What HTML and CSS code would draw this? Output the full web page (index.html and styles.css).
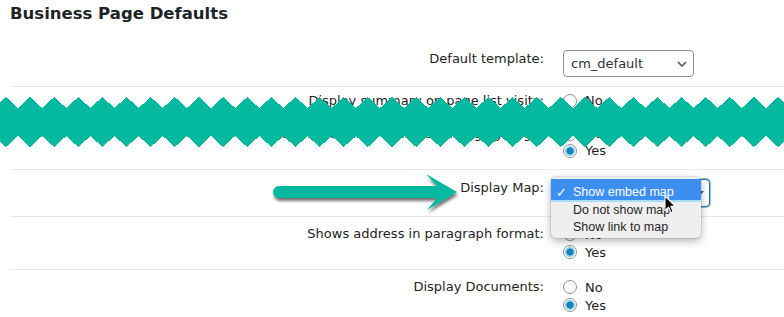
FILE: index.html
```html
<!DOCTYPE html>
<html lang="en">
<head>
    <meta charset="UTF-8">
    <meta name="viewport" content="width=device-width, initial-scale=1.0">
    <title>Business Page Defaults</title>
    <link rel="stylesheet" href="styles.css">
</head>
<body>
    <div class="page">
        <h2 class="title">Business Page Defaults</h2>

        <div class="rows">
            <div class="row">
                <label class="row-label">Default template:</label>
                <div class="field">
                    <div class="select-wrap">
                        <select class="select"><option>cm_default</option></select>
                        <svg class="chevron" width="10" height="6" viewBox="0 0 10 6"><path d="M1 1 L5 5 L9 1" fill="none" stroke="#50575e" stroke-width="1.6"/></svg>
                    </div>
                </div>
            </div>

            <div class="row compact first-half">
                <label class="row-label">Display summary on page list visits:</label>
                <div class="field">
                    <label class="option"><input type="radio" name="summary"> No</label>
                    <label class="option"><input type="radio" name="summary" checked> Yes</label>
                </div>
            </div>
            <div class="row compact second-half">
                <label class="row-label">Show business listing on category page:</label>
                <div class="field">
                    <label class="option"><input type="radio" name="listing"> No</label>
                    <label class="option"><input type="radio" name="listing" checked> Yes</label>
                </div>
            </div>

            <div class="row select-row">
                <!-- callout arrow pointing at the map option -->
                <svg class="callout" width="200" height="52" viewBox="0 0 200 52">
                    <defs>
                        <filter id="arrowShadow" x="-10%" y="-40%" width="120%" height="190%">
                            <feDropShadow dx="1" dy="3" stdDeviation="1.4" flood-color="#000" flood-opacity="0.55"/>
                        </filter>
                    </defs>
                    <path d="M11 17 H169 L158 5 L189 23 L159 41 L169 29 H11 A6 6 0 0 1 11 17 Z" fill="#02b99f" filter="url(#arrowShadow)"/>
                </svg>
                <label class="row-label">Display Map:</label>
                <div class="field">
                    <div class="select-wrap">
                        <select class="select select-wide focused">
                            <option>Show embed map</option>
                            <option>Do not show map</option>
                            <option>Show link to map</option>
                        </select>
                        <svg class="caret" width="7" height="4" viewBox="0 0 7 4"><path d="M0 0 H7 L3.5 4 Z" fill="#555"/></svg>

                        <!-- open dropdown list -->
                        <ul class="menu">
                            <li class="menu-item active"><span class="tick">&#10003;</span>Show embed map</li>
                            <li class="menu-item">Do not show map</li>
                            <li class="menu-item">Show link to map</li>
                        </ul>
                        <svg class="cursor" width="13" height="20" viewBox="0 0 13 20"><path d="M1 1 V15.5 L4.6 12.2 L7 17.8 L9.2 16.8 L6.8 11.4 H11.4 Z" fill="#000" stroke="#fff" stroke-width="1.1" stroke-linejoin="round"/></svg>
                    </div>
                </div>
            </div>

            <div class="row">
                <label class="row-label">Shows address in paragraph format:</label>
                <div class="field">
                    <label class="option"><input type="radio" name="address"> No</label>
                    <label class="option"><input type="radio" name="address" checked> Yes</label>
                </div>
            </div>

            <div class="row">
                <label class="row-label">Display Documents:</label>
                <div class="field">
                    <label class="option"><input type="radio" name="documents"> No</label>
                    <label class="option"><input type="radio" name="documents" checked> Yes</label>
                </div>
            </div>
        </div>

        <!-- torn-paper band hiding part of the screenshot -->
        <svg class="zigzag" width="784" height="50" viewBox="0 0 784 50" shape-rendering="crispEdges">
            <path fill="#02b99f" d="M-18.2 0
                l12.065 11 12.065 -11 l12.065 11 12.065 -11 l12.065 11 12.065 -11 l12.065 11 12.065 -11
                l12.065 11 12.065 -11 l12.065 11 12.065 -11 l12.065 11 12.065 -11 l12.065 11 12.065 -11
                l12.065 11 12.065 -11 l12.065 11 12.065 -11 l12.065 11 12.065 -11 l12.065 11 12.065 -11
                l12.065 11 12.065 -11 l12.065 11 12.065 -11 l12.065 11 12.065 -11 l12.065 11 12.065 -11
                l12.065 11 12.065 -11 l12.065 11 12.065 -11 l12.065 11 12.065 -11 l12.065 11 12.065 -11
                l12.065 11 12.065 -11 l12.065 11 12.065 -11 l12.065 11 12.065 -11 l12.065 11 12.065 -11
                l12.065 11 12.065 -11 l12.065 11 12.065 -11 l12.065 11 12.065 -11 l12.065 11 12.065 -11
                l12.065 11 12.065 -11 l12.065 11 12.065 -11 l12.065 11 12.065 -11 l12.065 11 12.065 -11
                l12.065 11 12.065 -11 l12.065 11 12.065 -11
                V50
                l-12.065 -11 -12.065 11 l-12.065 -11 -12.065 11 l-12.065 -11 -12.065 11 l-12.065 -11 -12.065 11
                l-12.065 -11 -12.065 11 l-12.065 -11 -12.065 11 l-12.065 -11 -12.065 11 l-12.065 -11 -12.065 11
                l-12.065 -11 -12.065 11 l-12.065 -11 -12.065 11 l-12.065 -11 -12.065 11 l-12.065 -11 -12.065 11
                l-12.065 -11 -12.065 11 l-12.065 -11 -12.065 11 l-12.065 -11 -12.065 11 l-12.065 -11 -12.065 11
                l-12.065 -11 -12.065 11 l-12.065 -11 -12.065 11 l-12.065 -11 -12.065 11 l-12.065 -11 -12.065 11
                l-12.065 -11 -12.065 11 l-12.065 -11 -12.065 11 l-12.065 -11 -12.065 11 l-12.065 -11 -12.065 11
                l-12.065 -11 -12.065 11 l-12.065 -11 -12.065 11 l-12.065 -11 -12.065 11 l-12.065 -11 -12.065 11
                l-12.065 -11 -12.065 11 l-12.065 -11 -12.065 11 l-12.065 -11 -12.065 11 l-12.065 -11 -12.065 11
                l-12.065 -11 -12.065 11 l-12.065 -11 -12.065 11
                Z"/>
        </svg>
    </div>
</body>
</html>
```

FILE: styles.css
```css
body {
    margin: 0;
    background: #fff;
    color: #1e1e1e;
    font-family: 'DejaVu Sans', Verdana, sans-serif;
    font-size: 13px;
}

.page {
    position: relative;
    padding-left: 10px;
    height: 317px;
    overflow: hidden;
}

.title {
    margin: 0 0 17px;
    padding-top: 4px;
    font-size: 16.5px;
    line-height: 20px;
    font-weight: bold;
    color: #1d2327;
}

/* Form rows */
.row {
    position: relative;
    display: grid;
    grid-template-columns: 534px 1fr;
    column-gap: 19px;
    padding: 8px 0;
}

.row + .row {
    border-top: 1px solid #e8e8e8;
}

.row-label {
    text-align: right;
    line-height: 18px;
}

.field {
    display: flex;
    flex-direction: column;
}

.option {
    display: flex;
    align-items: center;
    height: 18px;
}

.compact .option,
.compact .row-label {
    height: 16.5px;
    line-height: 16.5px;
}

.first-half {
    padding: 6px 0 0;
}

.row.second-half {
    border-top: none;
    padding: 0 0 10px;
}

.select-row {
    padding: 9px 0;
    z-index: 2;
}

.rows > .row:first-child {
    padding: 9px 0;
}

/* Radios */
input[type="radio"] {
    appearance: none;
    -webkit-appearance: none;
    width: 14px;
    height: 14px;
    margin: 0 8px 0 0;
    border: 1px solid #8c8f94;
    border-radius: 50%;
    background: #fff;
}

input[type="radio"]:checked {
    background: radial-gradient(circle, #1582bb 0 3.2px, #7fd0f2 3.8px 4.6px, #fff 5.2px);
}

/* Selects */
.select-wrap {
    position: relative;
    width: max-content;
}

.select {
    appearance: none;
    -webkit-appearance: none;
    display: block;
    width: 131px;
    height: 28px;
    padding: 0 24px 0 7px;
    border: 1px solid #8c8f94;
    border-radius: 4px;
    background: #fff;
    color: #2c3338;
    font-family: 'DejaVu Sans', Verdana, sans-serif;
    font-size: 13px;
}

.rows > .row:first-child .select {
    height: 27px;
}

.chevron {
    position: absolute;
    right: 7px;
    top: 11px;
}

.select-wide {
    width: 147px;
}

.select.focused {
    border-color: #2b6a93;
    box-shadow: 0 0 0 1px #8fc6ea;
}

.caret {
    position: absolute;
    right: 6px;
    top: 12px;
}

/* Open dropdown */
.menu {
    position: absolute;
    left: -12px;
    top: -2px;
    box-sizing: border-box;
    width: 150px;
    height: 61px;
    margin: 0;
    padding: 2px 0 0;
    list-style: none;
    background: #efefef;
    border-radius: 5px;
    box-shadow: 0 3px 9px rgba(0, 0, 0, 0.3), 0 0 0 1px rgba(0, 0, 0, 0.08);
    font-family: 'Liberation Sans', Arial, sans-serif;
    font-size: 12.5px;
    color: #262626;
}

.menu-item {
    box-sizing: border-box;
    height: 17px;
    padding: 2px 0 0 22px;
    line-height: 17px;
}

.menu-item.active {
    position: relative;
    height: 21px;
    padding-top: 5px;
    background: #3d8ef1;
    color: #fff;
    box-shadow: 0 2px 0 #a9dcf6;
}

.tick {
    position: absolute;
    left: 5px;
    font-family: 'DejaVu Sans', sans-serif;
    font-size: 13px;
    font-weight: bold;
}

.cursor {
    position: absolute;
    left: 101px;
    top: 16px;
}

/* Overlays */
.callout {
    position: absolute;
    left: 258px;
    top: -1px;
    overflow: visible;
}

.zigzag {
    position: absolute;
    left: 0;
    top: 97px;
}
```
